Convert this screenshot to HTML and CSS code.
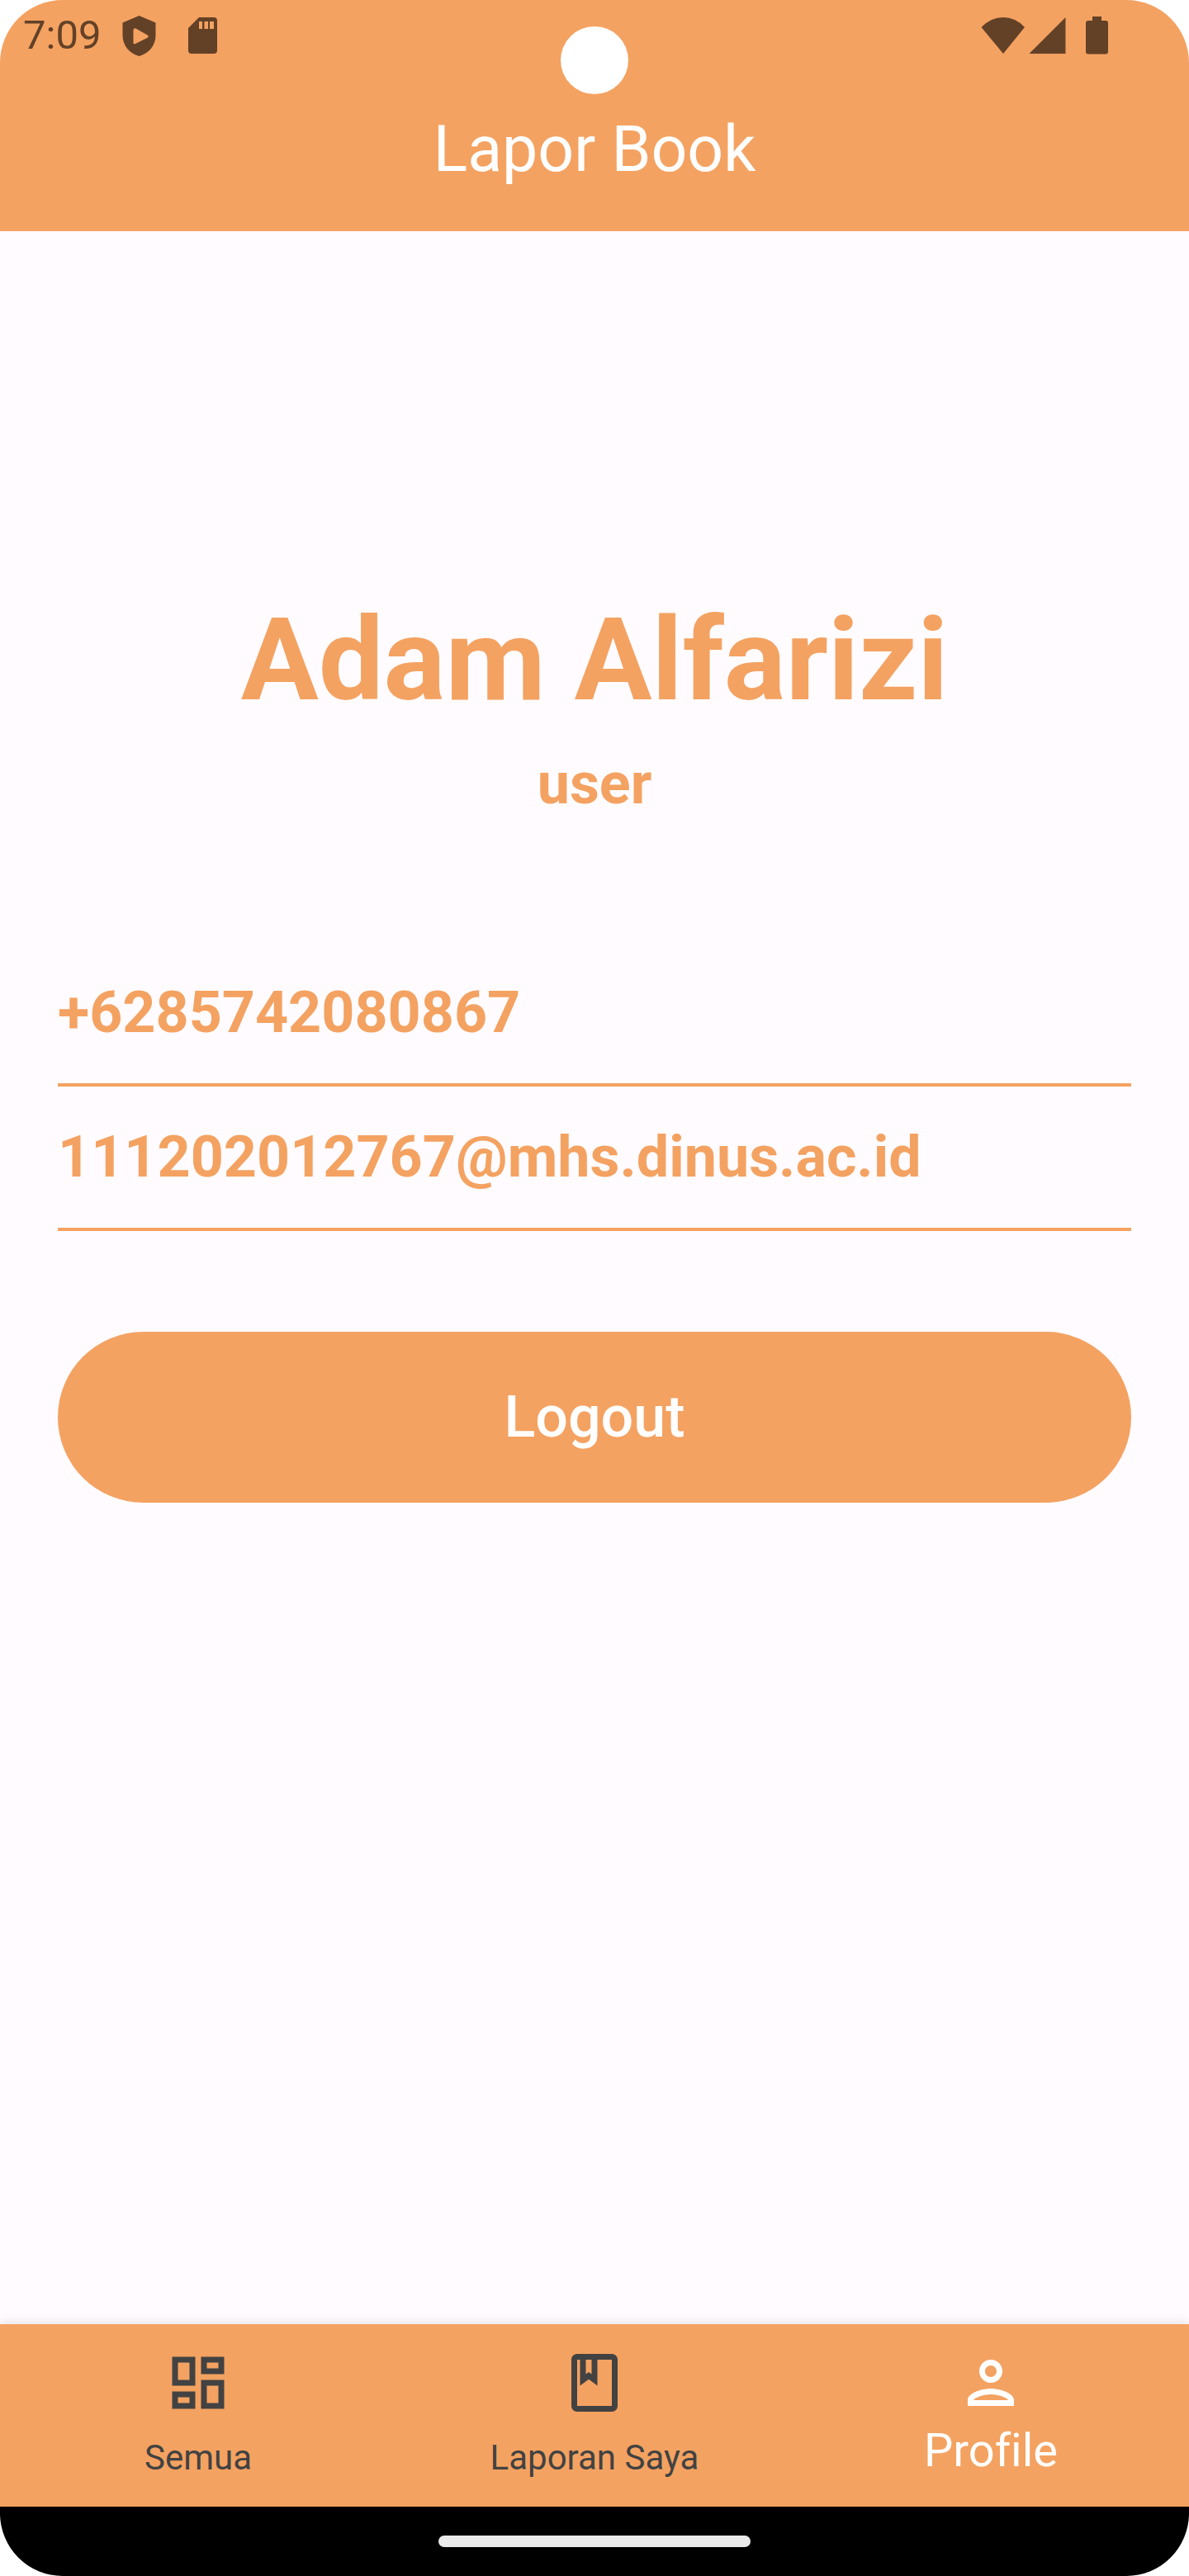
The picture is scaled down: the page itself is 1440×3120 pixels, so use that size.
FILE: index.html
```html
<!DOCTYPE html>
<html lang="id">
<head>
  <meta charset="utf-8">
  <meta name="viewport" content="width=device-width, initial-scale=1">
  <title>Lapor Book</title>
  <link rel="stylesheet" href="styles.css">
</head>
<body>
  <div class="app">
    <header class="header">
      <div class="status-bar">
        <div class="status-left">
          <time class="clock">7:09</time>
          <svg class="icon-shield" viewBox="0 0 41 49" width="41" height="49" aria-hidden="true">
            <path fill-rule="evenodd" d="M20.500 0 40.500 8.500V24C40.500 36 32 46 20.500 49 9 46 0.500 36 0.500 24V8.500ZM13.500 17v16.500q.3 1.200 2.500.5L31 26.500q1.500-1.500 0-2.700L16.500 15.500q-2.500-1-3 1.500Z"/>
          </svg>
          <svg class="icon-card" viewBox="0 0 35 44" width="35" height="44" aria-hidden="true">
            <path fill-rule="evenodd" d="M13 0H31Q35 0 35 4V40Q35 44 31 44H4Q0 44 0 40V13ZM13 5v9h4V5ZM19.500 5v9h4.500V5ZM26 5v9h5V5Z"/>
          </svg>
        </div>
        <div class="status-right">
          <svg viewBox="0 0 54 44" width="54" height="44" aria-hidden="true">
            <path d="M0.500 12Q12 0 27 0T53 12L27 44Z"/>
          </svg>
          <svg viewBox="0 0 45 44" width="45" height="44" aria-hidden="true">
            <path d="M44.500 0V44H0.500Z"/>
          </svg>
          <svg class="icon-battery" viewBox="0 0 27 46" width="27" height="46" aria-hidden="true">
            <path d="M8 0H19V5H24Q27 5 27 8V42.500Q27 45.500 24 45.500H3Q0 45.500 0 42.500V8Q0 5 3 5H8Z"/>
          </svg>
        </div>
      </div>
      <h1 class="title">Lapor Book</h1>
      <span class="camera"></span>
    </header>

    <main class="profile">
      <h2 class="name">Adam Alfarizi</h2>
      <p class="role">user</p>
      <div class="contacts">
        <p class="contact">+6285742080867</p>
        <p class="contact">111202012767@mhs.dinus.ac.id</p>
      </div>
      <button class="logout" type="button">Logout</button>
    </main>

    <nav class="tabs">
      <a class="tab" href="#semua">
        <svg class="tab-icon" viewBox="0 0 24 24" aria-hidden="true"><path d="M19 5v2h-4V5h4M9 5v6H5V5h4m10 8v6h-4v-6h4M9 17v2H5v-2h4M21 3h-8v6h8V3zM11 3H3v10h8V3zm10 8h-8v10h8V11zm-10 4H3v6h8v-6z"/></svg>
        <span class="tab-label">Semua</span>
      </a>
      <a class="tab" href="#laporan">
        <svg class="tab-icon" viewBox="0 0 24 24" aria-hidden="true"><path d="M18 2H6c-1.100 0-2 .9-2 2v16c0 1.100.9 2 2 2h12c1.100 0 2-.9 2-2V4c0-1.100-.9-2-2-2zM9 4h2v5l-1-.75L9 9V4zm9 16H6V4h1v9l3-2.250L13 13V4h5v16z"/></svg>
        <span class="tab-label">Laporan Saya</span>
      </a>
      <a class="tab tab-active" href="#profile" aria-current="page">
        <svg class="tab-icon" viewBox="0 0 24 24" aria-hidden="true"><path d="M12 6c1.100 0 2 .9 2 2s-.9 2-2 2-2-.9-2-2 .9-2 2-2m0 10c2.700 0 5.800 1.290 6 2H6c.23-.72 3.310-2 6-2m0-12C9.790 4 8 5.790 8 8s1.790 4 4 4 4-1.790 4-4-1.790-4-4-4zm0 10c-2.670 0-8 1.340-8 4v2h16v-2c0-2.660-5.330-4-8-4z"/></svg>
        <span class="tab-label">Profile</span>
      </a>
    </nav>

    <div class="gesture-bar"><span class="gesture-handle"></span></div>
  </div>
</body>
</html>
```

FILE: styles.css
```css
:root {
  --primary: #f4a261;
  --surface: #fffbff;
  --status: #624127;
  --muted: #424242;
}

* {
  box-sizing: border-box;
}

body {
  margin: 0;
  background: #fff;
  font-family: Roboto, "Liberation Sans", sans-serif;
  font-variant-ligatures: none;
}

h1,
h2,
p {
  margin: 0;
}

.app {
  display: flex;
  flex-direction: column;
  min-height: 100vh;
  border-radius: 76px;
  overflow: hidden;
  background: var(--surface);
}

.header {
  position: relative;
  background: var(--primary);
  padding-bottom: 54px;
}

.status-bar {
  display: flex;
  justify-content: space-between;
  height: 86px;
  margin-bottom: 50px;
  padding: 0 98px 0 28px;
  color: var(--status);
  fill: currentColor;
}

.status-left,
.status-right {
  display: flex;
  align-items: center;
}

.clock {
  margin-right: 26px;
  font-size: 49px;
  line-height: 58px;
}

.icon-shield {
  margin-right: 39px;
}

.status-right {
  gap: 4px;
}

.icon-battery {
  margin-left: 20px;
}

.title {
  color: #fff;
  font-size: 77px;
  font-weight: 400;
  line-height: 90px;
  text-align: center;
}

.camera {
  position: absolute;
  top: 32px;
  left: 50%;
  width: 82px;
  height: 82px;
  border-radius: 50%;
  background: #fff;
  transform: translateX(-50%);
}

.profile {
  flex: 1;
  display: flex;
  flex-direction: column;
  padding: 437px 70px 70px;
  color: var(--primary);
  font-size: 70px;
  font-weight: 700;
  line-height: 82px;
}

.name {
  margin-bottom: 27px;
  font-size: 140px;
  line-height: 164px;
  text-align: center;
}

.role {
  text-align: center;
}

.contacts {
  margin: 151px 0 122px;
}

.contact {
  padding: 44px 0 45px;
  border-bottom: 4px solid var(--primary);
  overflow-wrap: anywhere;
}

.logout {
  padding: 62px 70px 63px;
  border: 0;
  border-radius: 104px;
  background: var(--primary);
  color: #fff;
  font: 500 70px/82px Roboto, "Liberation Sans", sans-serif;
  cursor: pointer;
}

.tabs {
  display: grid;
  grid-template-columns: repeat(3, 1fr);
  background: var(--primary);
  box-shadow: 0 0 14px rgba(0, 0, 0, 0.14);
}

.tab {
  display: flex;
  flex-direction: column;
  align-items: center;
  gap: 24px;
  padding: 29px 0 34px;
  color: var(--muted);
  font-size: 42px;
  line-height: 50px;
  text-decoration: none;
}

.tab-active {
  gap: 7px;
  color: #fff;
  font-size: 56px;
  line-height: 66px;
}

.tab-icon {
  width: 84px;
  height: 84px;
  fill: currentColor;
}

.gesture-bar {
  position: relative;
  display: flex;
  justify-content: center;
  padding: 35px 0;
  background: #000;
}

.gesture-handle {
  width: 378px;
  height: 14px;
  border-radius: 7px;
  background: #ebebeb;
}
```
